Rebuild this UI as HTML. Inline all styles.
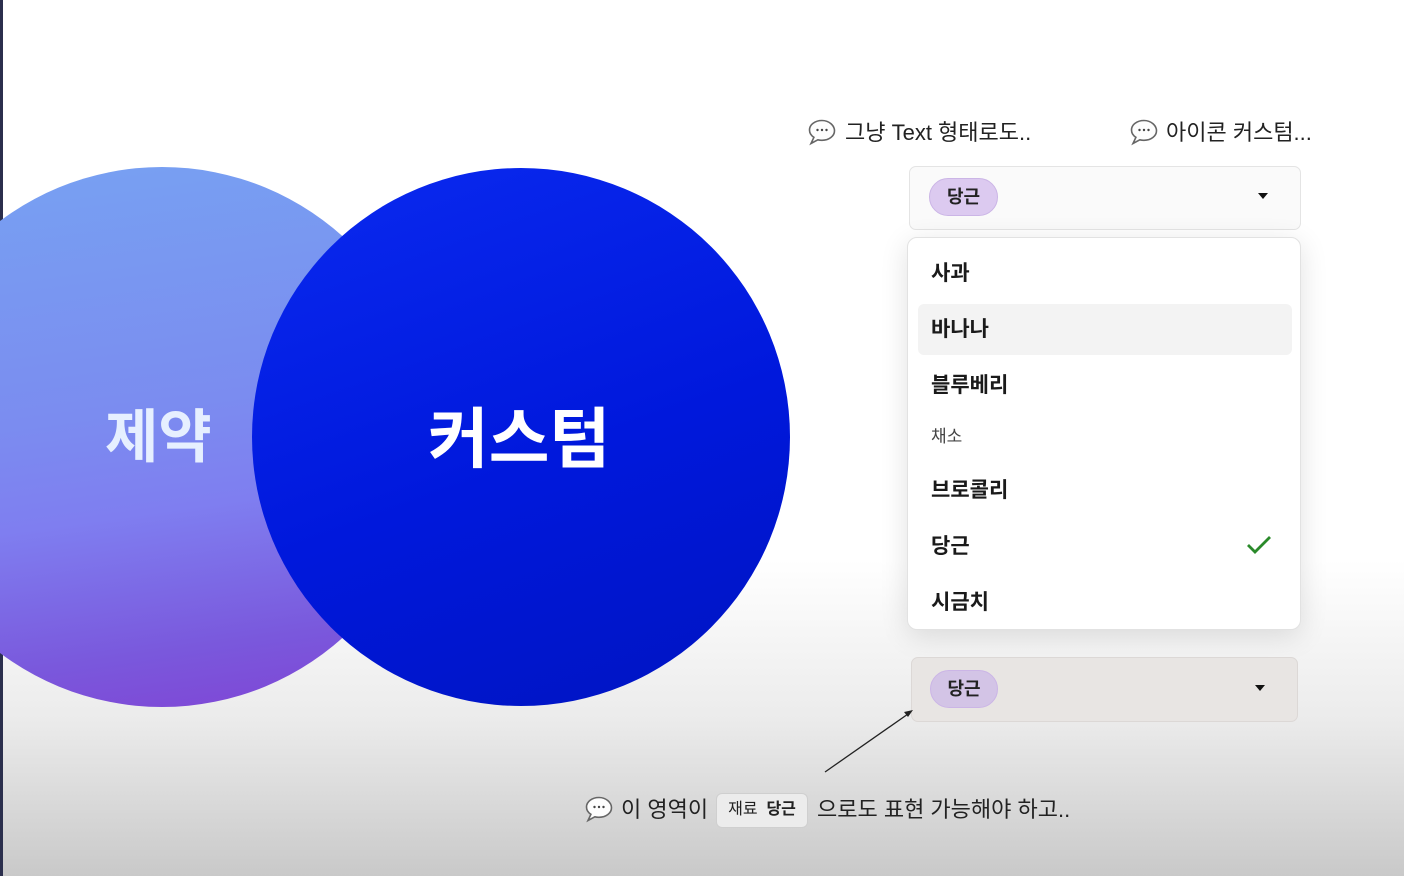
<!DOCTYPE html>
<html><head><meta charset="utf-8"><style>
*{margin:0;padding:0;box-sizing:border-box}
body{width:1404px;height:876px;overflow:hidden;position:relative;font-family:"Liberation Sans","Noto Sans CJK KR",sans-serif;
background:linear-gradient(to bottom,#fff 0,#fff 560px,#ebebeb 720px,#c9c9c9 876px);color:#111}
.abs{position:absolute}
.bar{left:0;top:0;width:3px;height:876px;background:#2b2f4d}
.c1{left:-108px;top:167px;width:540px;height:540px;border-radius:50%;
background:linear-gradient(172deg,#77a2f2 0%,#7b8cf0 45%,#7f7ef0 62%,#7a58dc 85%,#8043d4 100%)}
.c2{left:252px;top:168px;width:538px;height:538px;border-radius:50%;
background:linear-gradient(160deg,#0a2af0 0%,#0018dc 55%,#0014c0 100%)}
.big{color:#fff;font-weight:700;white-space:nowrap;line-height:1}
.lbl{font-size:22px;color:#222;white-space:nowrap;line-height:1}
.dd{border:1.5px solid #e4e4e4;border-radius:7px;background:#fafafa}
.chip{background:#dccaf0;border:1px solid #cbb5e6;border-radius:19px;font-size:18px;font-weight:700;color:#222;text-align:center;line-height:36px}
.tri{width:0;height:0;border-left:5px solid transparent;border-right:5px solid transparent;border-top:6px solid #111}
.menu{left:907px;top:237px;width:394px;height:393px;background:#fff;border:1px solid #e2e2e2;border-radius:10px;box-shadow:0 6px 28px rgba(0,0,0,.12)}
.it{position:absolute;left:23px;font-size:21px;font-weight:700;color:#1a1a1a;line-height:1}
</style></head><body>
<div class="abs bar"></div>
<div class="abs c1"></div>
<div class="abs c2"></div>
<div class="abs big" style="left:105px;top:409px;font-size:58px;color:#e6efff">제약</div>
<div class="abs big" style="left:428px;top:406px;font-size:66px">커스텀</div>

<svg width="0" height="0" style="position:absolute"><defs>
<symbol id="bub" viewBox="0 0 30 30"><path d="M15 3.5C8 3.5 2.5 7.6 2.5 13c0 3 1.7 5.6 4.4 7.3L4 26.5l6.8-3.7c1.3.3 2.7.5 4.2.5 7 0 12.5-4.2 12.5-9.5S22 3.5 15 3.5z" fill="#fdfdfd" stroke="#666" stroke-width="1.6"/><circle cx="10.5" cy="13" r="1.2" fill="#444"/><circle cx="15" cy="13" r="1.2" fill="#444"/><circle cx="19.5" cy="13" r="1.2" fill="#444"/></symbol></defs></svg>

<svg class="abs" style="left:807px;top:117px" width="30" height="30"><use href="#bub"/></svg>
<div class="abs lbl" style="left:845px;top:122px">그냥 Text 형태로도..</div>
<svg class="abs" style="left:1129px;top:117px" width="30" height="30"><use href="#bub"/></svg>
<div class="abs lbl" style="left:1166px;top:122px">아이콘 커스텀...</div>

<div class="abs dd" style="left:909px;top:166px;width:392px;height:64px"></div>
<div class="abs chip" style="left:929px;top:178px;width:69px;height:38px">당근</div>
<div class="abs tri" style="left:1258px;top:193px"></div>

<div class="abs menu">
<div style="position:absolute;left:10px;top:66px;width:374px;height:51px;background:#f3f3f3;border-radius:6px"></div>
<div class="it" style="top:25px">사과</div>
<div class="it" style="top:81px">바나나</div>
<div class="it" style="top:137px">블루베리</div>
<div class="it" style="top:190px;font-size:17px;font-weight:400;color:#444">채소</div>
<div class="it" style="top:242px">브로콜리</div>
<div class="it" style="top:298px">당근</div>
<div class="it" style="top:354px">시금치</div>
<svg style="position:absolute;left:338px;top:296px" width="26" height="22"><path d="M2 11l7 7L24 3" fill="none" stroke="#2a8a2a" stroke-width="2.8"/></svg>
</div>

<div class="abs dd" style="left:911px;top:657px;width:387px;height:65px;background:#e8e5e3;border-color:#dcd8d6"></div>
<div class="abs chip" style="left:930px;top:670px;width:68px;height:38px;background:#d3c4e6">당근</div>
<div class="abs tri" style="left:1255px;top:685px"></div>

<svg class="abs" style="left:0;top:0" width="1404" height="876"><line x1="825" y1="772" x2="908" y2="714" stroke="#222" stroke-width="1.3"/><path d="M913 710l-9 2 4 5z" fill="#222"/></svg>

<svg class="abs" style="left:584px;top:794px" width="30" height="30"><use href="#bub"/></svg>
<div class="abs lbl" style="left:621px;top:799px">이 영역이</div>
<div class="abs" style="left:716px;top:793px;width:92px;height:35px;border:1.5px solid #cfcfcf;border-radius:6px;background:#ececec;font-size:16px;line-height:32px;text-align:center;color:#222">재료&nbsp; <b>당근</b></div>
<div class="abs lbl" style="left:817px;top:799px">으로도 표현 가능해야 하고..</div>
</body></html>
